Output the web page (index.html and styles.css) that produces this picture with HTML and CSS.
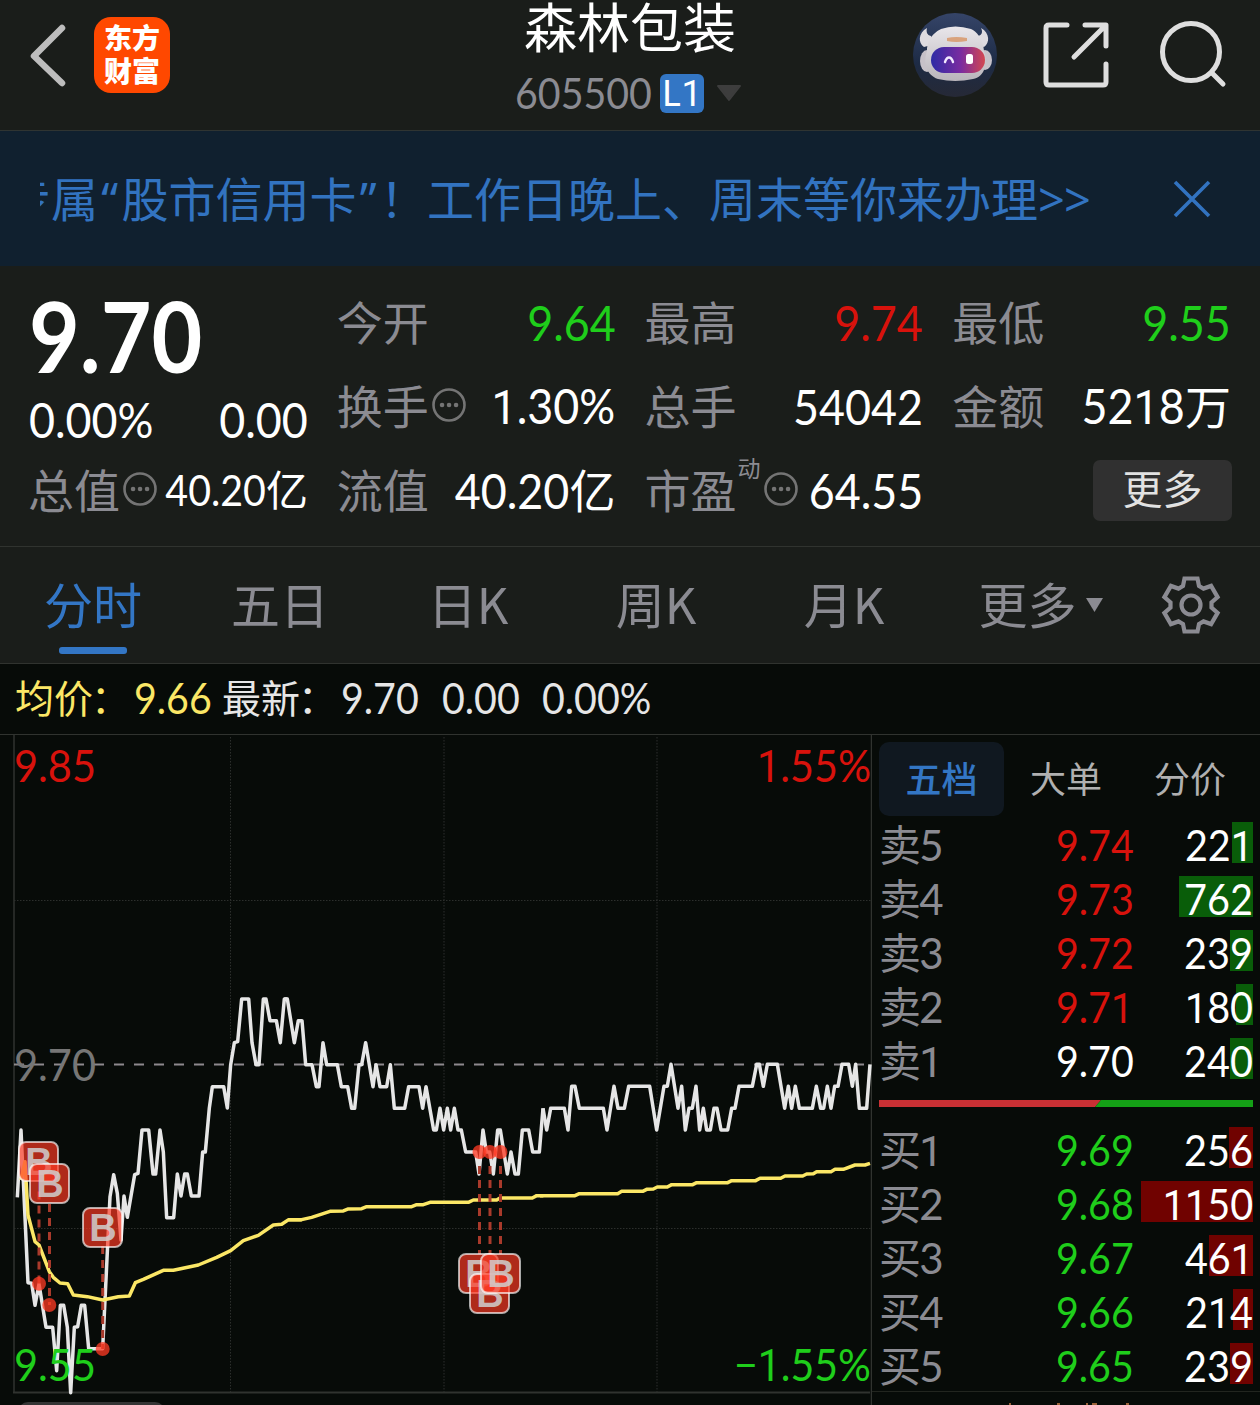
FILE: index.html
```html
<!DOCTYPE html>
<html lang="zh-CN">
<head>
<meta charset="utf-8">
<title>森林包装 605500</title>
<link rel="stylesheet" href="styles.css">
</head>
<body>
<header class="top">
  <div class="top-left">
    <svg class="back" width="38" height="64" viewBox="0 0 38 64"><path d="M33 4 5 32 33 59" fill="none" stroke="#bdbdbd" stroke-width="6.5" stroke-linecap="round" stroke-linejoin="round"/></svg>
    <div class="logo"><span>东方</span><span>财富</span></div>
  </div>
  <div class="top-title">
    <h1>森林包装</h1>
    <div class="code"><span class="num">605500</span><span class="l1">L<i>1</i></span><svg width="26" height="17" viewBox="0 0 26 17"><path d="M2 1H24L13 15Z" fill="#3d3d3d" stroke="#3d3d3d" stroke-width="2" stroke-linejoin="round"/></svg></div>
  </div>
  <div class="top-right">
    <svg width="84" height="84" viewBox="0 0 84 84">
      <defs>
        <linearGradient id="sky" x2="0" y2="1"><stop offset="0" stop-color="#354468"/><stop offset=".6" stop-color="#1d2b45"/><stop offset="1" stop-color="#262936"/></linearGradient>
        <linearGradient id="visor"><stop offset="0" stop-color="#2d2ba5"/><stop offset=".55" stop-color="#7a2ba0"/><stop offset="1" stop-color="#d34750"/></linearGradient>
        <linearGradient id="shell" x2="0" y2="1"><stop offset="0" stop-color="#e9e6ea"/><stop offset="1" stop-color="#b9b5bb"/></linearGradient>
      </defs>
      <circle cx="42" cy="42" r="42" fill="url(#sky)"/>
      <path d="M14 15C5 20 5 30 11 34L22 31 18 23C14 22 13 19 14 15ZM68 15C77 20 77 30 71 34L61 31 65 23C69 22 70 19 68 15Z" fill="#dedbe0"/>
      <ellipse cx="14" cy="48" rx="7" ry="11" fill="#c6c1c8"/><ellipse cx="72" cy="47" rx="7" ry="10" fill="#c6c1c8"/>
      <path d="M14 38C14 24 24 18 28 16Q42 11 58 16C63 18 70 25 71 38C75 50 72 64 60 66Q42 70 25 66C13 62 10 49 14 38Z" fill="url(#shell)"/>
      <path d="M34 25Q43 23 54 25V28Q43 30 34 28Z" fill="#d9a27c"/>
      <rect x="18" y="34" width="54" height="26" rx="13" fill="url(#visor)"/>
      <path d="M32 49C34 43 38 43 40 49" fill="none" stroke="#f2e9ff" stroke-width="2.4" stroke-linecap="round"/>
      <rect x="53" y="41" width="7" height="10" rx="2.5" fill="#fff"/>
    </svg>
    <svg width="66" height="66" viewBox="0 0 66 66" fill="none" stroke="#dedede" stroke-width="5" stroke-linecap="round" stroke-linejoin="round"><path d="M24 3H6Q3 3 3 6V60Q3 63 6 63H60Q63 63 63 60V42"/><path d="M42 3H63V24M62 4 31 35"/></svg>
    <svg width="68" height="68" viewBox="0 0 68 68" fill="none" stroke="#dedede" stroke-width="5" stroke-linecap="round"><circle cx="32" cy="32" r="28.5"/><path d="M53 53 64 64"/></svg>
  </div>
</header>

<div class="banner">
  <div class="marquee"><p>专属<span class="q">“</span>股市信用卡<span class="q">”</span>！工作日晚上、周末等你来办理<span class="arrows">&gt;&gt;</span></p></div>
  <svg width="40" height="40" viewBox="0 0 40 40"><path d="M3 3 37 37M37 3 3 37" stroke="#3273c0" stroke-width="3.6"/></svg>
</div>

<section class="quote">
  <div class="price">
    <b>9.70</b>
    <div class="pair"><span class="num">0.00%</span><span class="num r">0.00</span></div>
  </div>
  <div class="cell"><label>今开</label><span class="num up">9.64</span></div>
  <div class="cell"><label>最高</label><span class="num down">9.74</span></div>
  <div class="cell"><label>最低</label><span class="num up">9.55</span></div>
  <div class="cell"><label>换手</label><svg class="dots" viewBox="0 0 34 34"><circle cx="17" cy="17" r="15.5"/><path d="M10 17h.1M17 17h.1M24 17h.1"/></svg><span class="num"><i>1</i>.30%</span></div>
  <div class="cell"><label>总手</label><span class="num">54042</span></div>
  <div class="cell"><label>金额</label><span class="num">52<i>1</i>8</span><em>万</em></div>
  <div class="cell small"><label>总值</label><svg class="dots" viewBox="0 0 34 34"><circle cx="17" cy="17" r="15.5"/><path d="M10 17h.1M17 17h.1M24 17h.1"/></svg><span class="num">40.20</span><em>亿</em></div>
  <div class="cell"><label>流值</label><span class="num">40.20</span><em>亿</em></div>
  <div class="cell"><label>市盈</label><sup>动</sup><svg class="dots" viewBox="0 0 34 34"><circle cx="17" cy="17" r="15.5"/><path d="M10 17h.1M17 17h.1M24 17h.1"/></svg><span class="num">64.55</span></div>
  <div class="cell"><button>更多</button></div>
</section>

<nav class="tabs">
  <span class="on">分时</span><span>五日</span><span>日K</span><span>周K</span><span>月K</span>
  <span>更多<svg width="18" height="14" viewBox="0 0 18 14"><path d="M0 0H17L8.500 14Z" fill="#8b8b92"/></svg></span>
  <span><svg width="60" height="60" viewBox="-30 -30 60 60" fill="none" stroke="#8b8b92" stroke-width="4.200"><path d="M-6.500-26.500H6.500L8-19 12.500-16.400 20.100-19.100 26.600-7.900 20.500-2.600V2.600L26.600 7.900 20.100 19.100 12.500 16.400 8 19 6.500 26.500H-6.500L-8 19-12.500 16.400-20.100 19.100-26.600 7.900-20.500 2.600V-2.600L-26.600-7.900-20.100-19.100-12.500-16.400-8-19Z"/><circle r="9.500"/></svg></span>
</nav>

<div class="avg">
  <span class="y lab">均价<span>：</span></span><span class="y v1"><span class="num">9.66</span></span><span class="lab">最新<span>：</span></span><span class="v2"><span class="num">9.70</span></span><span class="v3"><span class="num">0.00</span></span><span class="num">0.00%</span>
</div>

<main class="main">
  <svg class="chart" width="872" height="670" viewBox="0 735 872 670">
    <g fill="none" stroke="#30332f">
      <path d="M14 735V1393M871.500 735V1405" stroke-width="1.500"/><path d="M13 1392.500H870" stroke-width="2"/>
      <path d="M14 900.500H871M14 1228.500H871M230.500 737V1392M444 737V1392M657 737V1392" stroke-dasharray="1.500 1.500" stroke="#2c2f2c"/>
    </g>
    <path d="M14 1064.500H871" stroke="#8d898d" stroke-width="2" stroke-dasharray="10 10"/>
    <g class="line" stroke="#e6e6e6" stroke-width="10.500">
      <polyline transform="translate(0 980) scale(.33333)" points="52,652 63,450 84,908 95,910 105,976 117,912 138,1042 158,1042 170,1172 181,976 191,976 202,1042 212,1238 223,1042 233,1040 244,976 254,976 266,1106 308,1106 330,650 341,584 352,640 363,780 372,648 382,712 404,584 414,580 426,450 446,450 459,582 467,582 480,450 490,516 500,713 521,713 532,582 543,648 554,582 562,582 574,648 597,648 608,516 616,516 628,384 637,320 671,320 682,384 692,254 703,188 713,185 725,57 746,57 756,188 768,254 777,254 790,57 798,57 810,122 829,122 841,188 853,57 862,57"/>
      <polyline transform="translate(220 980) scale(.33333)" points="193,57 202,57 223,188 235,122 246,122 257,254 276,254 289,320 297,320 309,188 320,254 352,254 364,320 383,320 395,385 404,385 417,254 425,254 437,188 459,320 468,254 480,320 500,320 511,254 523,385 554,385 566,320 597,320 608,385 618,320 641,450 649,450 660,385 671,450 682,385 692,450 703,385 714,450 724,450 737,516 767,516 777,582 789,450 799,516 809,516 820,582 833,450 841,450 862,582 873,516 885,582 895,582 907,450 926,450 938,516 958,516 969,385"/>
      <polyline transform="translate(540 1030) scale(.33333)" points="9,235 20,300 32,235 73,235 84,300 95,169 105,169 118,235 190,235 201,300 222,169 234,235 253,235 266,169 329,169 350,300 372,169 382,169 393,103 414,235 425,169 436,300 447,235 457,235 468,169 479,300 490,235 500,300 511,300 522,235 531,235 543,300 563,300 575,235 585,235 597,169 637,169 650,103 658,103 670,169 682,103 712,103 734,235 745,169 755,235 766,169 778,235 817,235 829,169 842,235 851,235 862,169 873,235 884,169 894,169 906,103 926,103 937,169 947,103 958,235 980,235 990,103"/>
    </g>
    <g class="line" stroke="#fbe766" stroke-width="10.500">
      <polyline transform="translate(0 980) scale(.33333)" points="63,600 75,545 84,705 105,785 117,795 148,875 160,892 180,909 203,911 220,945 262,950 308,960 355,950 388,948 406,908 430,898 490,871 520,871 595,855 650,832 692,812 730,782 775,766 820,735 845,733 866,719 905,719"/>
      <polyline transform="translate(220 980) scale(.33333)" points="205,719 245,719 275,712 330,694 370,693 385,687 425,686 440,680 575,680 590,674 610,674 630,667 745,667 760,660 830,660 840,654 937,654 950,647 970,647"/>
      <polyline transform="translate(540 1030) scale(.33333)" points="0,497 105,497 118,491 233,491 245,484 308,484 320,478 340,477 352,471 382,471 395,464 458,464 470,458 563,458 575,452 647,452 660,445 722,445 735,438 788,438 800,432 820,431 830,425 873,425 885,418 910,418 945,405 975,405 990,400"/>
    </g>
    <g stroke="#a93a2b" stroke-width="3" stroke-dasharray="8 6">
      <path d="M39 1191.500V1284M49.500 1204V1305M102.700 1246V1349M479.500 1166V1254M490 1166V1254M500.500 1166V1254"/>
    </g>
    <g fill="#ff3a24" fill-opacity=".76">
      <circle cx="39" cy="1283.700" r="7"/><circle cx="49.300" cy="1305" r="7"/><circle cx="102.700" cy="1349" r="7"/>
      <circle cx="479.500" cy="1152" r="7"/><circle cx="490" cy="1152" r="7"/><circle cx="500.500" cy="1152" r="7"/>
    </g>
    <g class="mark">
      <g transform="translate(19 1142)"><rect width="39" height="39" rx="7"/><text x="20" y="33">B</text></g>
      <g transform="translate(30 1164)"><rect width="39" height="39" rx="7"/><text x="20" y="33">B</text></g>
      <g transform="translate(83 1208)"><rect width="39" height="39" rx="7"/><text x="20" y="33">B</text></g>
      <g transform="translate(459 1254)"><rect width="39" height="39" rx="7"/><text x="20" y="33">B</text></g>
      <g transform="translate(470 1274)"><rect width="39" height="39" rx="7"/><text x="20" y="33">B</text></g>
      <g transform="translate(481 1254)"><rect width="39" height="39" rx="7"/><text x="20" y="33">B</text></g>
    </g>
    <g class="axis">
      <text x="14" y="782" fill="#d8120c" textLength="82" lengthAdjust="spacingAndGlyphs">9.85</text>
      <text x="757" y="782" fill="#d8120c" textLength="114" lengthAdjust="spacingAndGlyphs"><tspan class="one">1</tspan>.55%</text>
      <text x="14" y="1081" fill="#767676" textLength="82" lengthAdjust="spacingAndGlyphs">9.70</text>
      <text x="14" y="1381" fill="#1fce1b" textLength="82" lengthAdjust="spacingAndGlyphs">9.55</text>
      <text x="734" y="1381" fill="#1fce1b" textLength="137" lengthAdjust="spacingAndGlyphs">−<tspan class="one">1</tspan>.55%</text>
    </g>
    <rect x="18" y="1402" width="147" height="20" rx="10" fill="#353535"/>
  </svg>

  <aside class="book">
    <div class="book-tabs"><span class="on">五档</span><span>大单</span><span>分价</span></div>
    <div class="rows sell">
      <div class="row"><span>卖5</span><span class="num down">9.74</span><span class="qty"><s style="width:21px"></s><u>22<i>1</i></u></span></div>
      <div class="row"><span>卖4</span><span class="num down">9.73</span><span class="qty"><s style="width:74px"></s><u>762</u></span></div>
      <div class="row"><span>卖3</span><span class="num down">9.72</span><span class="qty"><s style="width:23px"></s><u>239</u></span></div>
      <div class="row"><span>卖2</span><span class="num down">9.7<i>1</i></span><span class="qty"><s style="width:17px"></s><u><i>1</i>80</u></span></div>
      <div class="row"><span>卖<i>1</i></span><span class="num">9.70</span><span class="qty"><s style="width:23px"></s><u>240</u></span></div>
    </div>
    <svg class="ratio" width="374" height="7" viewBox="0 0 374 7"><path d="M0 0H222L216 7H0Z" fill="#c93034"/><path d="M222 0H374V7H216Z" fill="#14a016"/></svg>
    <div class="rows buy">
      <div class="row"><span>买<i>1</i></span><span class="num up">9.69</span><span class="qty"><s style="width:24px"></s><u>256</u></span></div>
      <div class="row"><span>买2</span><span class="num up">9.68</span><span class="qty"><s style="width:112px"></s><u><i>1</i><i>1</i>50</u></span></div>
      <div class="row"><span>买3</span><span class="num up">9.67</span><span class="qty"><s style="width:44px"></s><u>46<i>1</i></u></span></div>
      <div class="row"><span>买4</span><span class="num up">9.66</span><span class="qty"><s style="width:20px"></s><u>2<i>1</i>4</u></span></div>
      <div class="row"><span>买5</span><span class="num up">9.65</span><span class="qty"><s style="width:23px"></s><u>239</u></span></div>
    </div>
    <svg class="next" width="388" height="14" viewBox="0 0 388 14"><path d="M0 .5H388" stroke="#22251f"/><path d="M137 13h2M185 13h3M214 13h2M220 13h5M254 13h3" stroke="#9a6238" stroke-width="2"/></svg>
  </aside>
</main>
</body>
</html>
```

FILE: styles.css
```css
* { box-sizing: border-box; }
body { margin: 0; width: 1260px; height: 1405px; overflow: hidden; background: #070b08; color: #fff; font-family: Lato, "Noto Sans CJK SC", sans-serif; font-weight: 400; }
svg { display: block; flex: none; }
i { font-family: Roboto, sans-serif; font-style: normal; }
em { font: 400 46px/60px "Noto Sans CJK SC", sans-serif; margin-top: -9px; }
.num { display: inline-block; white-space: nowrap; transform: scaleX(.915); transform-origin: left; }
.up { color: #1fce1b; }
.down { color: #d8120c; }

.top { height: 131px; background: #1a1d1a; border-bottom: 1px solid #2f3432; display: grid; grid-template-columns: 430px 400px 430px; }
.top-left { display: flex; align-items: flex-start; padding: 17px 0 0 29px; gap: 27px; }
.back { margin-top: 7px; }
.logo { width: 76px; height: 76px; border-radius: 17px; background: #ff4800; display: flex; flex-direction: column; align-items: center; padding-top: 4px; font: 900 28px/33px "Noto Sans CJK SC", sans-serif; }
.top-title { display: flex; flex-direction: column; align-items: center; }
h1 { margin: 0; font: 400 53px/50px "Noto Sans CJK SC", sans-serif; }
.code { display: flex; align-items: center; height: 42px; margin-top: 22px; color: #8b8b92; font-size: 43px; }
.code .num { margin-right: -12px; line-height: 42px; margin-left: -3px; }
.l1 { width: 44px; height: 39px; border-radius: 6px; background: #3376c5; color: #fff; font-size: 36px; line-height: 37px; text-align: center; margin: 0 12px 0 8px; letter-spacing: 1px; }
.top-right { display: flex; padding-left: 83px; }
.top-right svg:nth-child(1) { margin-top: 13px; }
.top-right svg:nth-child(2) { margin: 22px 50px 0 46px; }
.top-right svg:nth-child(3) { margin-top: 20px; }

.banner { height: 135px; background: #10202f; display: flex; align-items: center; padding-left: 40px; color: #3273c0; }
.marquee { width: 1070px; overflow: hidden; margin-right: 62px; margin-top: -4px; }
.marquee p { margin: 0 0 0 -36px; font: 400 47px/70px "Noto Sans CJK SC", sans-serif; white-space: nowrap; }
.q { display: inline-block; width: 23.500px; font-family: "Noto Sans", sans-serif; text-align: center; line-height: 60px; }
.arrows { font-family: "Noto Sans", sans-serif; letter-spacing: -1px; line-height: 60px; }

.quote { height: 281px; background: #1a1d1a; border-bottom: 1px solid #30332f; display: grid; grid-template-columns: repeat(4, 278.75px); grid-template-rows: repeat(3, 84px); column-gap: 29px; padding: 16px 29px 0; font-size: 49px; }
.price { grid-row: span 2; }
.price b { display: block; font-size: 98px; line-height: 106px; transform: scaleX(.895); transform-origin: left; }
.pair { display: flex; justify-content: space-between; line-height: 54px; margin-top: 4px; }
.cell { display: flex; align-items: center; white-space: nowrap; }
.cell label { flex: none; color: #8b8b92; font: 400 46px/60px "Noto Sans CJK SC", sans-serif; margin: -9px 0 0 0; }
.cell .num, .r { margin-left: auto; transform-origin: right; }
.cell .num { line-height: 60px; margin-top: -4px; }
.cell.small .num { font-size: 43px; margin-left: -1px; }
.cell.small label { margin-left: -1px; }
.small em { font-size: 42px; }
.dots { width: 34px; height: 34px; margin: -6px 0 0 3px; fill: none; stroke: #747474; stroke-width: 2.600; stroke-linecap: round; }
.dots path { stroke-width: 4.500; }
sup { font: 400 23px/24px "Noto Sans CJK SC", sans-serif; color: #8b8b92; align-self: flex-start; margin: 5px 0 0 1px; }
.cell button { margin: -4px -1px 0 auto; width: 139px; height: 61px; border: 0; border-radius: 7px; background: #303030; color: #e2e2e2; font: 400 40px/54px "Noto Sans CJK SC", sans-serif; padding: 0 0 6px; }

.tabs { height: 117px; background: #1a1d1a; border-bottom: 1px solid #30332f; display: grid; grid-template-columns: 186px 188px 188px 188px 188px 206px 94px; color: #8b8b92; font: 400 49px/112px "Noto Sans CJK SC", sans-serif; }
.tabs span { display: flex; justify-content: center; height: 112px; align-items: center; }
.tabs span:nth-child(6) svg { margin: 4px 0 0 9px; }
.tabs span:nth-child(7) svg { margin-top: 4px; }
.tabs .on { color: #3376c5; position: relative; }
.tabs .on::after { content: ""; position: absolute; left: 59px; top: 100px; width: 68px; height: 7px; border-radius: 3px; background: #3376c5; }

.avg { height: 71px; border-bottom: 1px solid #30332f; display: flex; align-items: center; padding-left: 15px; font-size: 43px; line-height: 60px; padding-bottom: 2px; color: #e6e6e6; }
.avg .lab { width: 119px; font: 400 39px/60px "Noto Sans CJK SC", sans-serif; margin-top: -4px; }
.lab span { margin-left: -2px; }
.avg .y { color: #fbe766; }
.v1 { width: 88px; }
.v2 { width: 101px; }
.v3 { width: 100px; }

.main { display: flex; height: 670px; }
.line { fill: none; stroke-linejoin: round; }
.mark rect { fill: #ff3a24; fill-opacity: .68; stroke: #fff; stroke-opacity: .65; stroke-width: 2; }
.mark text { font: 700 38px "Liberation Sans", sans-serif; fill: #d0d0d0; fill-opacity: .85; text-anchor: middle; }
.axis { font-size: 45px; }
.one { font-family: Roboto, sans-serif; }

.book { width: 388px; font-size: 43px; }
.book-tabs { display: grid; grid-template-columns: 125px 124px 124px; height: 74px; margin: 7px 0 3px 7px; font: 400 36px/70px "Noto Sans CJK SC", sans-serif; text-align: center; color: #b0b0b0; }
.book-tabs .on { background: #101820; border-radius: 10px; color: #3376c5; font-weight: 500; height: 74px; }
.row { display: grid; grid-template-columns: 177px 85px 112px; height: 54px; line-height: 52px; padding-left: 7px; }
.row > span:first-child { color: #8b8b92; font-size: 42px; letter-spacing: -1.800px; }
.qty { position: relative; text-align: right; }
.qty s { position: absolute; right: 0; top: 3px; height: 41px; background: #095d09; }
.buy .qty s { background: #700200; }
.qty u { position: relative; display: inline-block; text-decoration: none; transform: scaleX(.92); transform-origin: right; }
.ratio { margin: 11px 0 17px 7px; }
.next { margin-top: -3px; }
```
